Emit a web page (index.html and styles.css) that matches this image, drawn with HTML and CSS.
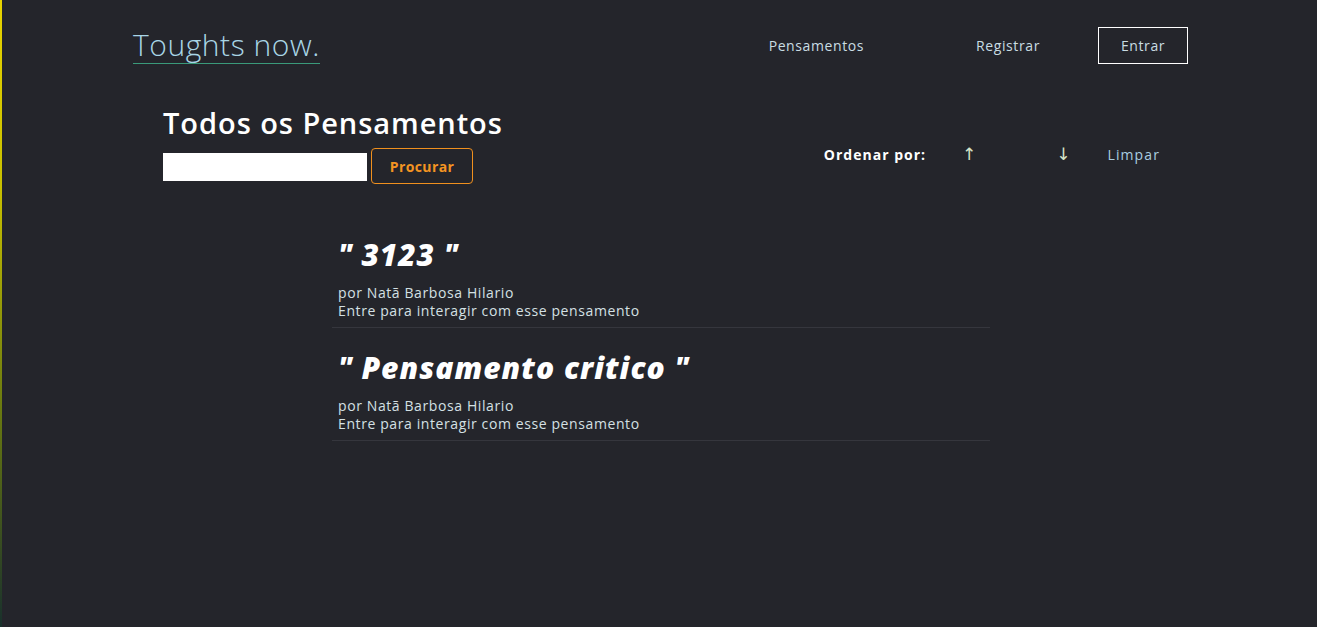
FILE: index.html
```html
<!DOCTYPE html>
<html lang="pt-BR">
<head>
<meta charset="utf-8">
<title>Toughts now.</title>
<link rel="stylesheet" href="styles.css">
</head>
<body>
<div class="page">
  <header class="topbar">
    <a class="logo" href="#">Toughts now.</a>
    <nav class="nav">
      <a class="nav-link nav-thoughts" href="#">Pensamentos</a>
      <a class="nav-link nav-register" href="#">Registrar</a>
      <a class="nav-link nav-login" href="#">Entrar</a>
    </nav>
  </header>

  <section class="toolbar">
    <div class="search-block">
      <h1 class="page-title">Todos os Pensamentos</h1>
      <form class="search-form">
        <input class="search-input" type="text">
        <button class="search-btn" type="button">Procurar</button>
      </form>
    </div>
    <div class="order">
      <span class="order-label">Ordenar por:</span>
      <a class="order-arrow arrow-up" href="#">&#8593;</a>
      <a class="order-arrow arrow-down" href="#">&#8595;</a>
      <a class="order-clear" href="#">Limpar</a>
    </div>
  </section>

  <section class="thoughts">
    <article class="thought">
      <h2 class="thought-title">" 3123 "</h2>
      <p class="thought-author">por Natã Barbosa Hilario</p>
      <p class="thought-note">Entre para interagir com esse pensamento</p>
    </article>
    <article class="thought">
      <h2 class="thought-title">" Pensamento critico "</h2>
      <p class="thought-author">por Natã Barbosa Hilario</p>
      <p class="thought-note">Entre para interagir com esse pensamento</p>
    </article>
  </section>
</div>
</body>
</html>
```

FILE: styles.css
```css
* { box-sizing: border-box; }

html, body {
  margin: 0;
  padding: 0;
  background: #24252b;
}

body {
  font-family: "Open Sans", "Liberation Sans", sans-serif;
  color: #d6e2e6;
}

.page {
  min-height: 100vh;
  border-left: 2px solid #e6d200;
  border-image: linear-gradient(180deg, #e8d400 0%, #c8c000 30%, #6a7a10 65%, #18302c 100%) 1;
}

a { text-decoration: none; }

/* header */
.topbar {
  display: flex;
  align-items: center;
  justify-content: space-between;
  padding: 27px 0 0 131px;
  width: 1186px;
  height: 64px;
}

.logo {
  font-family: "Open Sans", sans-serif;
  font-weight: 300;
  font-size: 30px;
  letter-spacing: 0.55px;
  color: #a9d6e6;
  line-height: 32px;
  border-bottom: 1px solid #3a9a7a;
  padding-bottom: 2px;
  margin-top: 2px;
}

.nav {
  display: flex;
  align-items: center;
  height: 37px;
}

.nav-link {
  font-size: 14px;
  letter-spacing: 0.6px;
  color: #c9dde3;
}

.nav-thoughts { margin-right: 112px; }
.nav-register { margin-right: 58px; }

.nav-login {
  display: flex;
  align-items: center;
  justify-content: center;
  width: 90px;
  height: 37px;
  border: 1px solid #ffffff;
}

/* toolbar */
.toolbar {
  display: flex;
  justify-content: space-between;
  align-items: flex-start;
  width: 1186px;
  padding: 40px 28px 0 161px;
}

.page-title {
  margin: 0;
  font-size: 29px;
  font-weight: 600;
  color: #ffffff;
  line-height: 38px;
  letter-spacing: 0.95px;
}

.search-form {
  display: flex;
  align-items: center;
  margin-top: 6px;
}

.search-input {
  width: 204px;
  height: 28px;
  border: none;
  background: #ffffff;
  margin: 1px 4px 0 0;
}

.search-btn {
  width: 102px;
  height: 36px;
  border: 1px solid #f0901e;
  border-radius: 4px;
  background: transparent;
  color: #f39422;
  font-family: "Open Sans", sans-serif;
  font-weight: 700;
  font-size: 14px;
  letter-spacing: 0.4px;
  cursor: pointer;
}

.order {
  display: flex;
  align-items: center;
  margin-top: 40px;
  font-size: 14px;
}

.order-label {
  font-weight: 700;
  color: #ffffff;
  letter-spacing: 1px;
}

.order-arrow {
  color: #d6e4c8;
  font-size: 17px;
  font-family: "DejaVu Sans", sans-serif;
}

.arrow-up { margin-left: 36px; }
.arrow-down { margin-left: 80px; }

.order-clear {
  margin-left: 37px;
  color: #a9cde0;
  letter-spacing: 1.1px;
}

/* thoughts */
.thoughts {
  width: 658px;
  margin: 46px 0 0 330px;
}

.thought {
  border-bottom: 1px solid #35363d;
  padding: 0 6px 7px;
  margin-bottom: 15px;
}

.thought-title {
  margin: 0 0 4px;
  font-family: "Open Sans", sans-serif;
  font-weight: 800;
  font-style: italic;
  font-size: 30px;
  letter-spacing: 1px;
  line-height: 50px;
  color: #ffffff;
}

.thought-author,
.thought-note {
  margin: 0;
  font-size: 14px;
  line-height: 18px;
  color: #d4e0e4;
  letter-spacing: 0.6px;
}
```
